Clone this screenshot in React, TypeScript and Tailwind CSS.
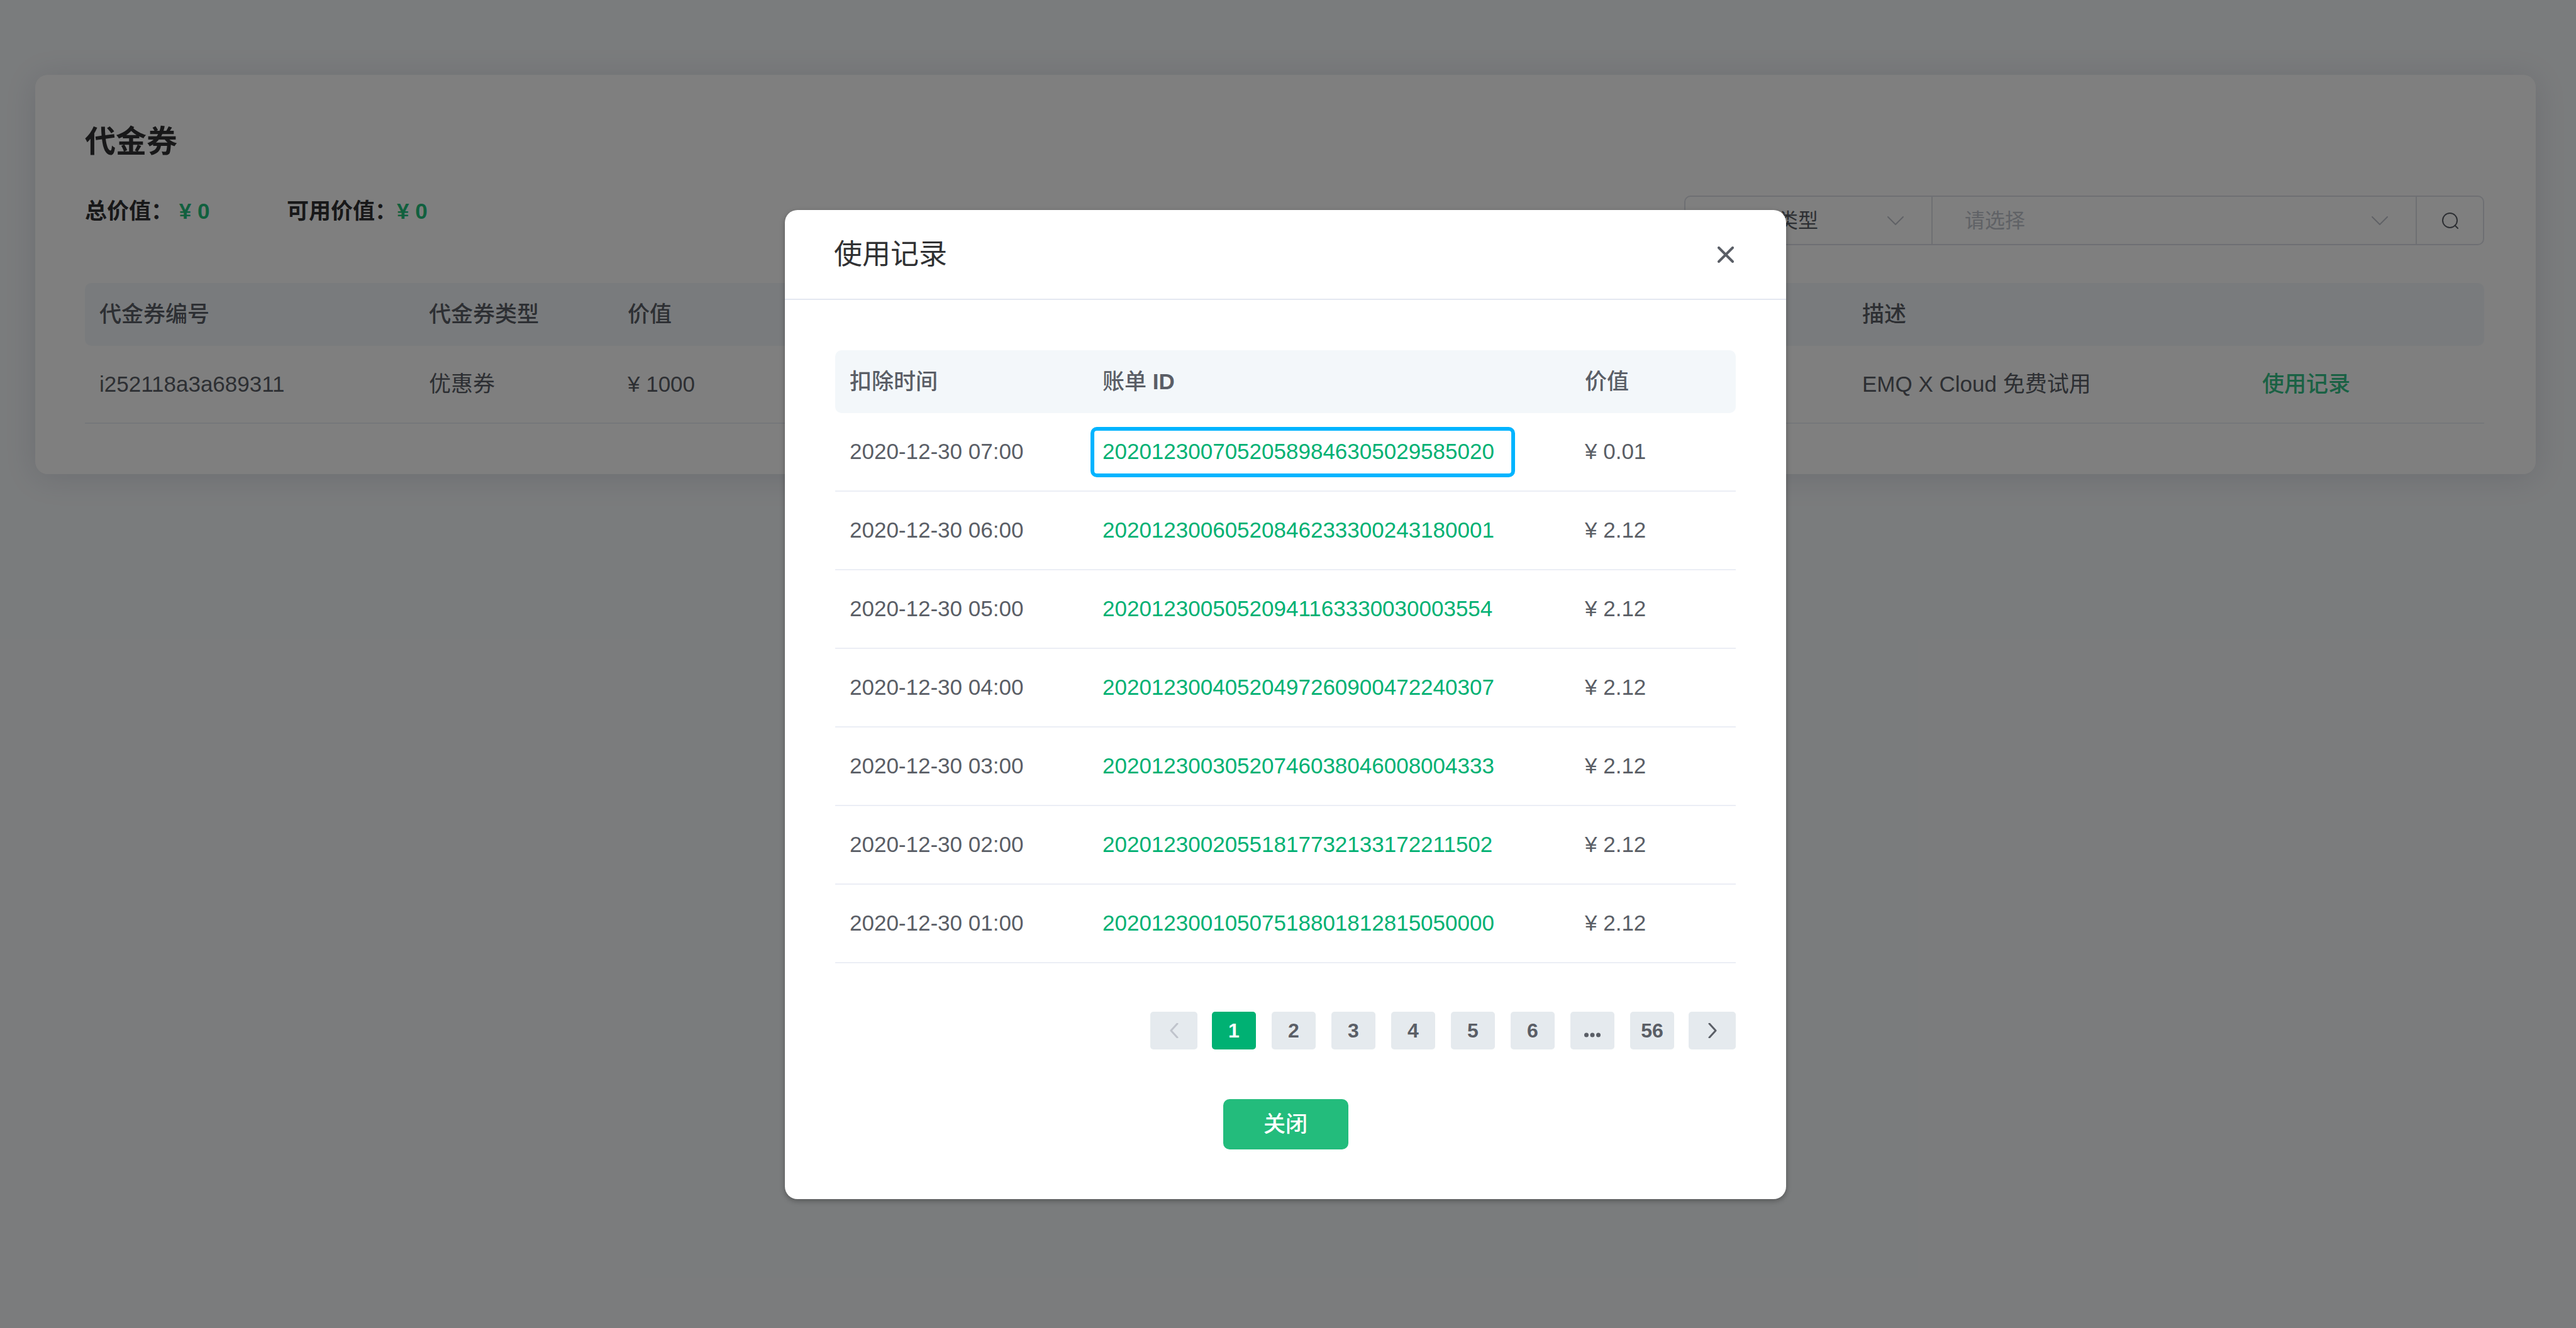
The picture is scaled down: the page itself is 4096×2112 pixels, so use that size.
import React from "react";

const usage = [
  { time: "2020-12-30 07:00", id: "20201230070520589846305029585020", value: "¥ 0.01", active: true },
  { time: "2020-12-30 06:00", id: "20201230060520846233300243180001", value: "¥ 2.12" },
  { time: "2020-12-30 05:00", id: "20201230050520941163330030003554", value: "¥ 2.12" },
  { time: "2020-12-30 04:00", id: "20201230040520497260900472240307", value: "¥ 2.12" },
  { time: "2020-12-30 03:00", id: "20201230030520746038046008004333", value: "¥ 2.12" },
  { time: "2020-12-30 02:00", id: "20201230020551817732133172211502", value: "¥ 2.12" },
  { time: "2020-12-30 01:00", id: "20201230010507518801812815050000", value: "¥ 2.12" },
];

const pages = ["1", "2", "3", "4", "5", "6", "more", "56"];

function ChevronDown() {
  return (
    <svg viewBox="0 0 26 14" className="pointer-events-none h-[14px] w-[26px]" fill="none" stroke="#c0c4cc" strokeWidth="2" strokeLinecap="round" strokeLinejoin="round" aria-hidden="true">
      <path d="M1 1l12 12L25 1" />
    </svg>
  );
}

function MoreDots() {
  return (
    <svg viewBox="0 0 26 24" className="h-6 w-[26px]" fill="currentColor" aria-hidden="true">
      <circle cx="3.5" cy="19" r="3.5" />
      <circle cx="13" cy="19" r="3.5" />
      <circle cx="22.5" cy="19" r="3.5" />
    </svg>
  );
}

function Filters() {
  return (
    <div className="flex h-[79px] items-stretch rounded-[10px] border-2 border-[#dcdfe6] text-[32px]">
      <label className="relative flex w-[393px] items-center border-r-2 border-[#dcdfe6]">
        <select aria-label="筛选条件" className="h-full w-full appearance-none bg-transparent pl-[51px] text-[#5a5e66]">
          <option>代金券类型</option>
        </select>
        <span className="absolute right-[44px]"><ChevronDown /></span>
      </label>
      <label className="relative flex w-[770px] items-center border-r-2 border-[#dcdfe6]">
        <select aria-label="代金券类型" className="h-full w-full appearance-none bg-transparent pl-[51px] text-[#c0c4cc]">
          <option>请选择</option>
        </select>
        <span className="absolute right-[44px]"><ChevronDown /></span>
      </label>
      <button aria-label="搜索" className="flex w-[105px] items-center justify-center">
        <svg viewBox="0 0 26 26" className="h-[26px] w-[26px]" fill="none" stroke="#5a5e66" strokeWidth="2" strokeLinecap="round" aria-hidden="true">
          <circle cx="12.5" cy="12.5" r="11.5" />
          <path d="M20.5 20.5L25 25" />
        </svg>
      </button>
    </div>
  );
}

function VoucherCard() {
  return (
    <section className="mx-14 mt-[119px] rounded-[20px] bg-white pt-[70px] pr-[82px] pb-20 pl-[79px] shadow-[0_5px_50px_rgba(34,34,80,0.13)]">
      <h1 className="text-[49px] leading-[72px] font-bold text-[#303133]">代金券</h1>
      <div className="mt-[50px] flex items-start justify-between">
        <div className="flex text-[35px] leading-[50px] font-bold text-[#303133]">
          <p className="w-[321px]">总价值： <span className="text-[#22c07c]">¥ 0</span></p>
          <p>可用价值：<span className="text-[#22c07c]">¥ 0</span></p>
        </div>
        <Filters />
      </div>
      <table className="mt-[60px] w-full table-fixed border-separate border-spacing-0 text-left text-[35px] text-[#5a5e66]">
        <thead>
          <tr className="h-[100px] [&>th]:bg-[#f3f7fa] [&>th]:px-[23px] [&>th]:font-medium">
            <th className="w-[524px] rounded-l-[10px]">代金券编号</th>
            <th className="w-[316px]">代金券类型</th>
            <th>价值</th>
            <th className="w-[636px]">描述</th>
            <th className="w-[376px] rounded-r-[10px]" aria-label="操作"></th>
          </tr>
        </thead>
        <tbody>
          <tr className="h-[124px] [&>td]:border-b-2 [&>td]:border-[#ebeef5] [&>td]:px-[23px]">
            <td>i252118a3a689311</td>
            <td>优惠券</td>
            <td>¥ 1000</td>
            <td>EMQ X Cloud 免费试用</td>
            <td><a href="#usage" className="font-medium text-[#34c388]">使用记录</a></td>
          </tr>
        </tbody>
      </table>
    </section>
  );
}

function Pagination() {
  return (
    <nav aria-label="分页" className="mt-[77px] flex h-[60px] justify-end gap-[23px] text-[32px] font-bold text-[#5a5e66]">
      <button disabled aria-label="上一页" className="flex w-[75px] items-center justify-center rounded-[5px] bg-[#e5eaee]">
        <svg viewBox="0 0 14 24" className="h-6 w-[14px]" fill="none" stroke="#c0c4cc" strokeWidth="3" strokeLinecap="round" strokeLinejoin="round" aria-hidden="true">
          <path d="M12 1L2 12l10 11" />
        </svg>
      </button>
      <div className="flex gap-[25px]">
        {pages.map((p) => (
          <button
            key={p}
            aria-label={p === "more" ? "更多" : undefined}
            className={
              p === "1"
                ? "flex w-[70px] items-center justify-center rounded-[5px] bg-[#00b173] text-white"
                : "flex w-[70px] items-center justify-center rounded-[5px] bg-[#e5eaee]"
            }
          >
            {p === "more" ? <MoreDots /> : p}
          </button>
        ))}
      </div>
      <button aria-label="下一页" className="flex w-[75px] items-center justify-center rounded-[5px] bg-[#e5eaee]">
        <svg viewBox="0 0 14 24" className="h-6 w-[14px]" fill="none" stroke="#5a5e66" strokeWidth="3" strokeLinecap="round" strokeLinejoin="round" aria-hidden="true">
          <path d="M2 1l10 11L2 23" />
        </svg>
      </button>
    </nav>
  );
}

function UsageDialog() {
  return (
    <div role="dialog" aria-labelledby="usage-title" className="w-[1592px] rounded-[20px] bg-white shadow-[0_3px_8px_rgba(0,0,0,0.3)]">
      <header className="flex h-[143px] items-center justify-between border-b-2 border-[#e4e8f1] pr-[83px] pl-[78px]">
        <h2 id="usage-title" className="text-[45px] text-[#303133]">使用记录</h2>
        <button aria-label="关闭对话框">
          <svg viewBox="0 0 26 26" className="h-[26px] w-[26px]" fill="none" stroke="#5a5e66" strokeWidth="4" strokeLinecap="round" aria-hidden="true">
            <path d="M2 2l22 22M24 2L2 24" />
          </svg>
        </button>
      </header>
      <div className="flex flex-col px-20 pt-20 pb-[79px]">
        <table className="w-full table-fixed border-separate border-spacing-0 text-left text-[35px] text-[#5a5e66]">
          <thead>
            <tr className="h-[100px] [&>th]:bg-[#f3f7fa] [&>th]:px-[23px] [&>th]:font-medium">
              <th className="w-[402px] rounded-l-[10px]">扣除时间</th>
              <th>账单 <span className="font-bold">ID</span></th>
              <th className="w-[263px] rounded-r-[10px]">价值</th>
            </tr>
          </thead>
          <tbody>
            {usage.map((r) => (
              <tr key={r.id} className="h-[125px] [&>td]:border-b-2 [&>td]:border-[#ebeef5] [&>td]:px-[23px]">
                <td>{r.time}</td>
                <td>
                  <a
                    href="#bill"
                    className={
                      r.active
                        ? "-ml-[19px] flex h-20 w-fit items-center rounded-[10px] border-6 border-[#00b4ff] pr-[27px] pl-[13px] text-[#00b173]"
                        : "text-[#00b173]"
                    }
                  >
                    {r.id}
                  </a>
                </td>
                <td>{r.value}</td>
              </tr>
            ))}
          </tbody>
        </table>
        <Pagination />
        <button className="mt-[79px] h-20 w-[199px] self-center rounded-[10px] bg-[#23bc7c] text-[35px] font-medium text-white">关闭</button>
      </div>
    </div>
  );
}

export default function App() {
  return (
    <div className="relative flex min-h-screen flex-col bg-[#f5f8fa] pr-2 font-['Liberation_Sans','Noto_Sans_CJK_SC',sans-serif]">
      <VoucherCard />
      <div className="absolute inset-0 flex items-start justify-center bg-black/50 pt-[334px] pr-2">
        <UsageDialog />
      </div>
    </div>
  );
}
